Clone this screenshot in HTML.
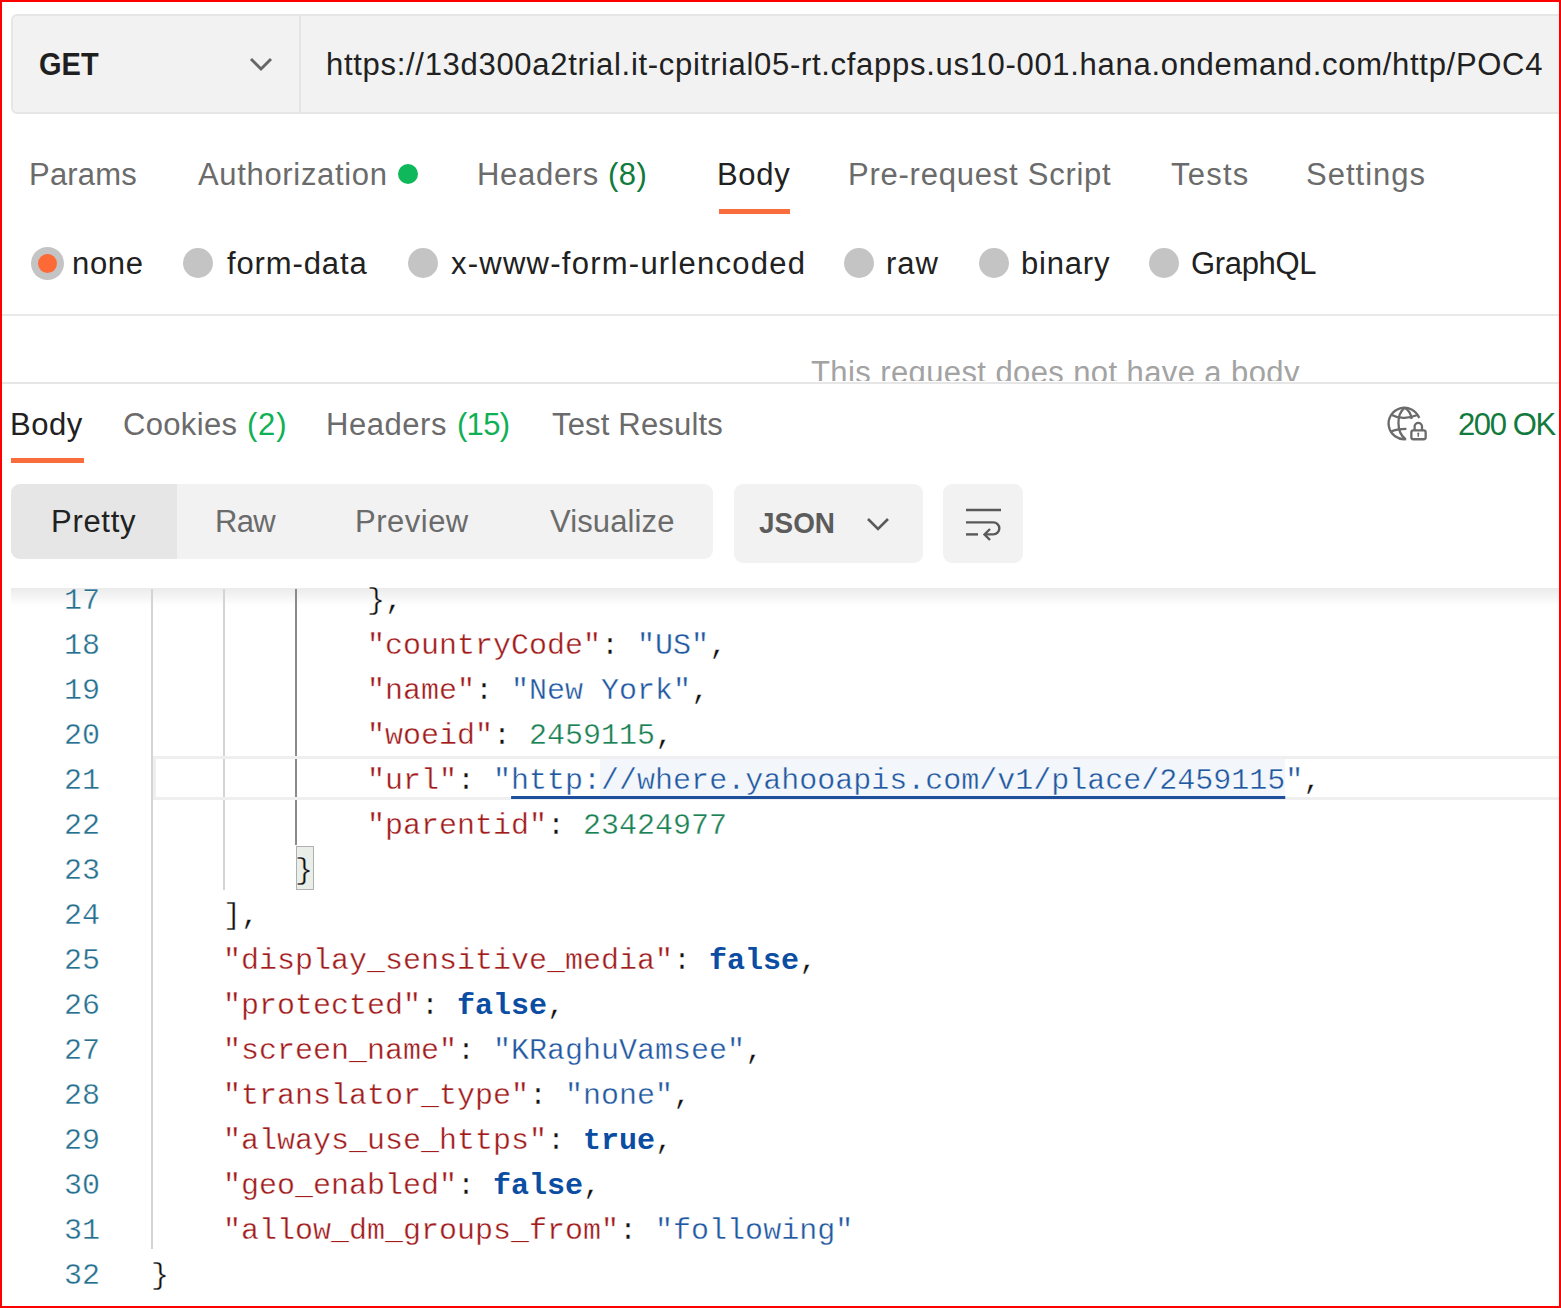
<!DOCTYPE html>
<html><head><meta charset="utf-8">
<style>
html,body{margin:0;padding:0;}
body{width:1561px;height:1308px;position:relative;overflow:hidden;background:#fff;font-family:"Liberation Sans",sans-serif;}
.a{position:absolute;white-space:nowrap;}
.t{font-size:31px;line-height:36px;color:#6b6b6b;}
.frame{position:absolute;left:0;top:0;width:1561px;height:1308px;box-sizing:border-box;border:2px solid #f00;z-index:50;pointer-events:none;}
/* url bar */
#urlbar{left:11px;top:14px;width:1600px;height:100px;box-sizing:border-box;background:#f2f2f2;border:2px solid #e6e6e6;border-radius:6px;}
#div1{left:298.5px;top:16px;width:2px;height:96px;background:#e4e4e4;}
.rad{position:absolute;width:30px;height:30px;border-radius:50%;background:#c4c4c4;}
.code{font-family:"Liberation Mono",monospace;font-size:30px;line-height:45px;-webkit-text-stroke:0.35px #fff;}
.ln{color:#26708f;text-align:right;width:60px;}
.k{color:#a11b1b;}
.s{color:#1f58a1;}
.n{color:#1a8155;}
.b{color:#0b4da2;font-weight:bold;-webkit-text-stroke:0;}
.p{color:#111;}
.ul{text-decoration:underline;text-decoration-thickness:3px;text-underline-offset:7px;text-decoration-color:#1d4f9c;text-decoration-skip-ink:none;}
.guide{position:absolute;width:2px;background:#d4d4d4;}
</style></head>
<body>
<!-- URL bar -->
<div class="a" id="urlbar"></div>
<div class="a" id="div1"></div>
<div class="a" style="left:39px;top:47px;font-size:31px;line-height:36px;font-weight:bold;color:#1f1f1f;transform:scaleX(0.935);transform-origin:0 0;">GET</div>
<svg class="a" style="left:248px;top:55px" width="26" height="18" viewBox="0 0 26 18"><path d="M3 4 L13 14 L23 4" fill="none" stroke="#666" stroke-width="2.9"/></svg>
<div class="a" style="left:326px;top:47px;font-size:31px;line-height:36px;color:#212121;letter-spacing:0.7px;">https://13d300a2trial.it-cpitrial05-rt.cfapps.us10-001.hana.ondemand.com/http/POC4</div>

<!-- request tabs -->
<div class="a t" style="left:29px;top:157px;letter-spacing:0.2px;">Params</div>
<div class="a t" style="left:198px;top:157px;letter-spacing:0.67px;">Authorization</div>
<div class="a" style="left:398px;top:164px;width:20px;height:20px;border-radius:50%;background:#0fb85a;"></div>
<div class="a t" style="left:477px;top:157px;letter-spacing:0.7px;">Headers</div><div class="a t" style="left:608px;top:157px;color:#0f7b3c;letter-spacing:0.5px;">(8)</div>
<div class="a t" style="left:717px;top:157px;color:#212121;letter-spacing:0.67px;">Body</div>
<div class="a" style="left:719px;top:209px;width:71px;height:5px;background:#f86d3b;"></div>
<div class="a t" style="left:848px;top:157px;letter-spacing:0.76px;">Pre-request Script</div>
<div class="a t" style="left:1171px;top:157px;letter-spacing:1.25px;">Tests</div>
<div class="a t" style="left:1306px;top:157px;letter-spacing:1px;">Settings</div>

<!-- radios -->
<div class="rad" style="left:31px;top:247px;width:33px;height:33px;"></div>
<div class="a" style="left:38px;top:254.2px;width:19px;height:19px;border-radius:50%;background:#fd6a36;"></div>
<div class="a t" style="left:72px;top:246px;color:#212121;letter-spacing:0.67px;">none</div>
<div class="rad" style="left:183px;top:248px;"></div>
<div class="a t" style="left:227px;top:246px;color:#212121;letter-spacing:0.875px;">form-data</div>
<div class="rad" style="left:408px;top:248px;"></div>
<div class="a t" style="left:451px;top:246px;color:#212121;letter-spacing:1.25px;">x-www-form-urlencoded</div>
<div class="rad" style="left:844px;top:248px;"></div>
<div class="a t" style="left:886px;top:246px;color:#212121;letter-spacing:1px;">raw</div>
<div class="rad" style="left:979px;top:248px;"></div>
<div class="a t" style="left:1021px;top:246px;color:#212121;letter-spacing:0.8px;">binary</div>
<div class="rad" style="left:1149px;top:248px;"></div>
<div class="a t" style="left:1191px;top:246px;color:#212121;letter-spacing:-0.33px;">GraphQL</div>

<div class="a" style="left:0;top:314px;width:1561px;height:2px;background:#e9e9e9;"></div>
<div class="a" style="left:0;top:316px;width:1561px;height:65px;overflow:hidden;">
  <div class="a t" style="left:811px;top:39px;color:#a3a3a3;letter-spacing:0.4px;">This request does not have a body</div>
</div>
<div class="a" style="left:0;top:381.5px;width:1561px;height:2.5px;background:#e6e6e6;"></div>

<!-- response tabs -->
<div class="a t" style="left:10px;top:407px;color:#212121;letter-spacing:0.5px;">Body</div>
<div class="a" style="left:11px;top:458px;width:73px;height:5px;background:#f86d3b;"></div>
<div class="a t" style="left:123px;top:407px;letter-spacing:0.33px;">Cookies</div><div class="a t" style="left:247px;top:407px;color:#10b055;letter-spacing:0.8px;">(2)</div>
<div class="a t" style="left:326px;top:407px;letter-spacing:0.55px;">Headers</div><div class="a t" style="left:457px;top:407px;color:#10b055;letter-spacing:-0.7px;">(15)</div>
<div class="a t" style="left:552px;top:407px;letter-spacing:0.18px;">Test Results</div>
<svg class="a" style="left:1380px;top:398px" width="55" height="50" viewBox="0 0 55 50">
  <g fill="none" stroke="#6b6b6b" stroke-width="2.3" stroke-linecap="butt">
    <path d="M39.2 20 A15.8 15.8 0 1 0 26.2 41.2"/>
    <path d="M24.6 9.8 C16.5 16, 16 34, 25.5 41.2"/>
    <path d="M24.6 9.8 C28.5 12, 31 16, 31.6 21"/>
    <path d="M11.8 17 C16 19.3, 20 20, 24.5 19.8 C29 19.6, 34 18.5, 38.2 16.8"/>
    <path d="M11.3 33.5 C15 31.5, 20 30.8, 26.4 30.8"/>
  </g>
  <rect x="31.35" y="32.45" width="14.3" height="8.8" rx="2" fill="#fff" stroke="#6b6b6b" stroke-width="2.3"/>
  <path d="M34.6 32.4 V28.6 A3.7 3.7 0 0 1 42 28.6 V32.4" fill="none" stroke="#6b6b6b" stroke-width="2.3"/>
  <path d="M38.3 35.6 V38.8" stroke="#6b6b6b" stroke-width="1.5"/>
  <circle cx="38.3" cy="35.6" r="1" fill="#6b6b6b"/>
</svg>
<div class="a t" style="left:1458px;top:407px;color:#137a3e;letter-spacing:-1.4px;">200 OK</div>

<!-- toolbar -->
<div class="a" style="left:11px;top:484px;width:702px;height:75px;background:#f2f2f2;border-radius:9px;overflow:hidden;">
  <div class="a" style="left:0;top:0;width:166px;height:75px;background:#e6e6e6;"></div>
</div>
<div class="a t" style="left:51px;top:504px;color:#212121;letter-spacing:0.7px;">Pretty</div>
<div class="a t" style="left:215px;top:504px;letter-spacing:-0.75px;">Raw</div>
<div class="a t" style="left:355px;top:504px;letter-spacing:0.5px;">Preview</div>
<div class="a t" style="left:550px;top:504px;letter-spacing:0.12px;">Visualize</div>
<div class="a" style="left:734px;top:484px;width:189px;height:79px;background:#f2f2f2;border-radius:9px;"></div>
<div class="a" style="left:759px;top:505px;font-size:30px;line-height:36px;font-weight:bold;color:#5c5c5c;transform:scaleX(0.93);transform-origin:0 0;">JSON</div>
<svg class="a" style="left:865px;top:515px" width="26" height="18" viewBox="0 0 26 18"><path d="M3 4 L13 14 L23 4" fill="none" stroke="#5a5a5a" stroke-width="2.6"/></svg>
<div class="a" style="left:943px;top:484px;width:80px;height:79px;background:#f2f2f2;border-radius:9px;"></div>
<svg class="a" style="left:960px;top:500px" width="50" height="50" viewBox="0 0 50 50">
  <g fill="none" stroke="#595959" stroke-width="2.4">
    <path d="M6 10 H41"/>
    <path d="M6 22.4 H33.3 A6 6 0 0 1 33.3 34.4 H25"/>
    <path d="M30 29 L24.5 34.4 L30 40"/>
    <path d="M6 34.4 H18"/>
  </g>
</svg>
<!-- shadow -->
<div class="a" style="left:11px;top:588px;width:1561px;height:18px;background:linear-gradient(#ebebeb,rgba(255,255,255,0));"></div>

<!-- code -->
<div class="guide" style="left:151px;top:589px;height:660px;"></div>
<div class="guide" style="left:223px;top:589px;height:301px;"></div>
<div class="guide" style="left:295px;top:589px;height:256px;background:#8a8a8a;"></div>
<div class="a" style="left:153px;top:756px;width:1420px;height:44px;box-sizing:border-box;border:3px solid #efefef;border-right:0;"></div>
<div class="a" style="left:296px;top:845.5px;width:17.5px;height:44.5px;box-sizing:border-box;background:#e9eee9;border:1.5px solid #b0b0b0;"></div>
<div class="a" style="left:600px;top:759px;width:685px;height:38px;background:#f3f7fb;"></div>

<div class="a code" style="left:40px;top:579px;">
<div class="ln">17</div><div class="ln">18</div><div class="ln">19</div><div class="ln">20</div><div class="ln">21</div><div class="ln">22</div><div class="ln">23</div><div class="ln">24</div><div class="ln">25</div><div class="ln">26</div><div class="ln">27</div><div class="ln">28</div><div class="ln">29</div><div class="ln">30</div><div class="ln">31</div><div class="ln">32</div>
</div>
<div class="a code p" style="left:151px;top:579px;">
<div style="white-space:pre">            },</div>
<div style="white-space:pre">            <span class="k">"countryCode"</span>: <span class="s">"US"</span>,</div>
<div style="white-space:pre">            <span class="k">"name"</span>: <span class="s">"New York"</span>,</div>
<div style="white-space:pre">            <span class="k">"woeid"</span>: <span class="n">2459115</span>,</div>
<div style="white-space:pre">            <span class="k">"url"</span>: <span class="s">"<span class="ul">http://where.yahooapis.com/v1/place/2459115</span>"</span>,</div>
<div style="white-space:pre">            <span class="k">"parentid"</span>: <span class="n">23424977</span></div>
<div style="white-space:pre">        }</div>
<div style="white-space:pre">    ],</div>
<div style="white-space:pre">    <span class="k">"display_sensitive_media"</span>: <span class="b">false</span>,</div>
<div style="white-space:pre">    <span class="k">"protected"</span>: <span class="b">false</span>,</div>
<div style="white-space:pre">    <span class="k">"screen_name"</span>: <span class="s">"KRaghuVamsee"</span>,</div>
<div style="white-space:pre">    <span class="k">"translator_type"</span>: <span class="s">"none"</span>,</div>
<div style="white-space:pre">    <span class="k">"always_use_https"</span>: <span class="b">true</span>,</div>
<div style="white-space:pre">    <span class="k">"geo_enabled"</span>: <span class="b">false</span>,</div>
<div style="white-space:pre">    <span class="k">"allow_dm_groups_from"</span>: <span class="s">"following"</span></div>
<div style="white-space:pre">}</div>
</div>

<div class="frame"></div>
</body></html>
